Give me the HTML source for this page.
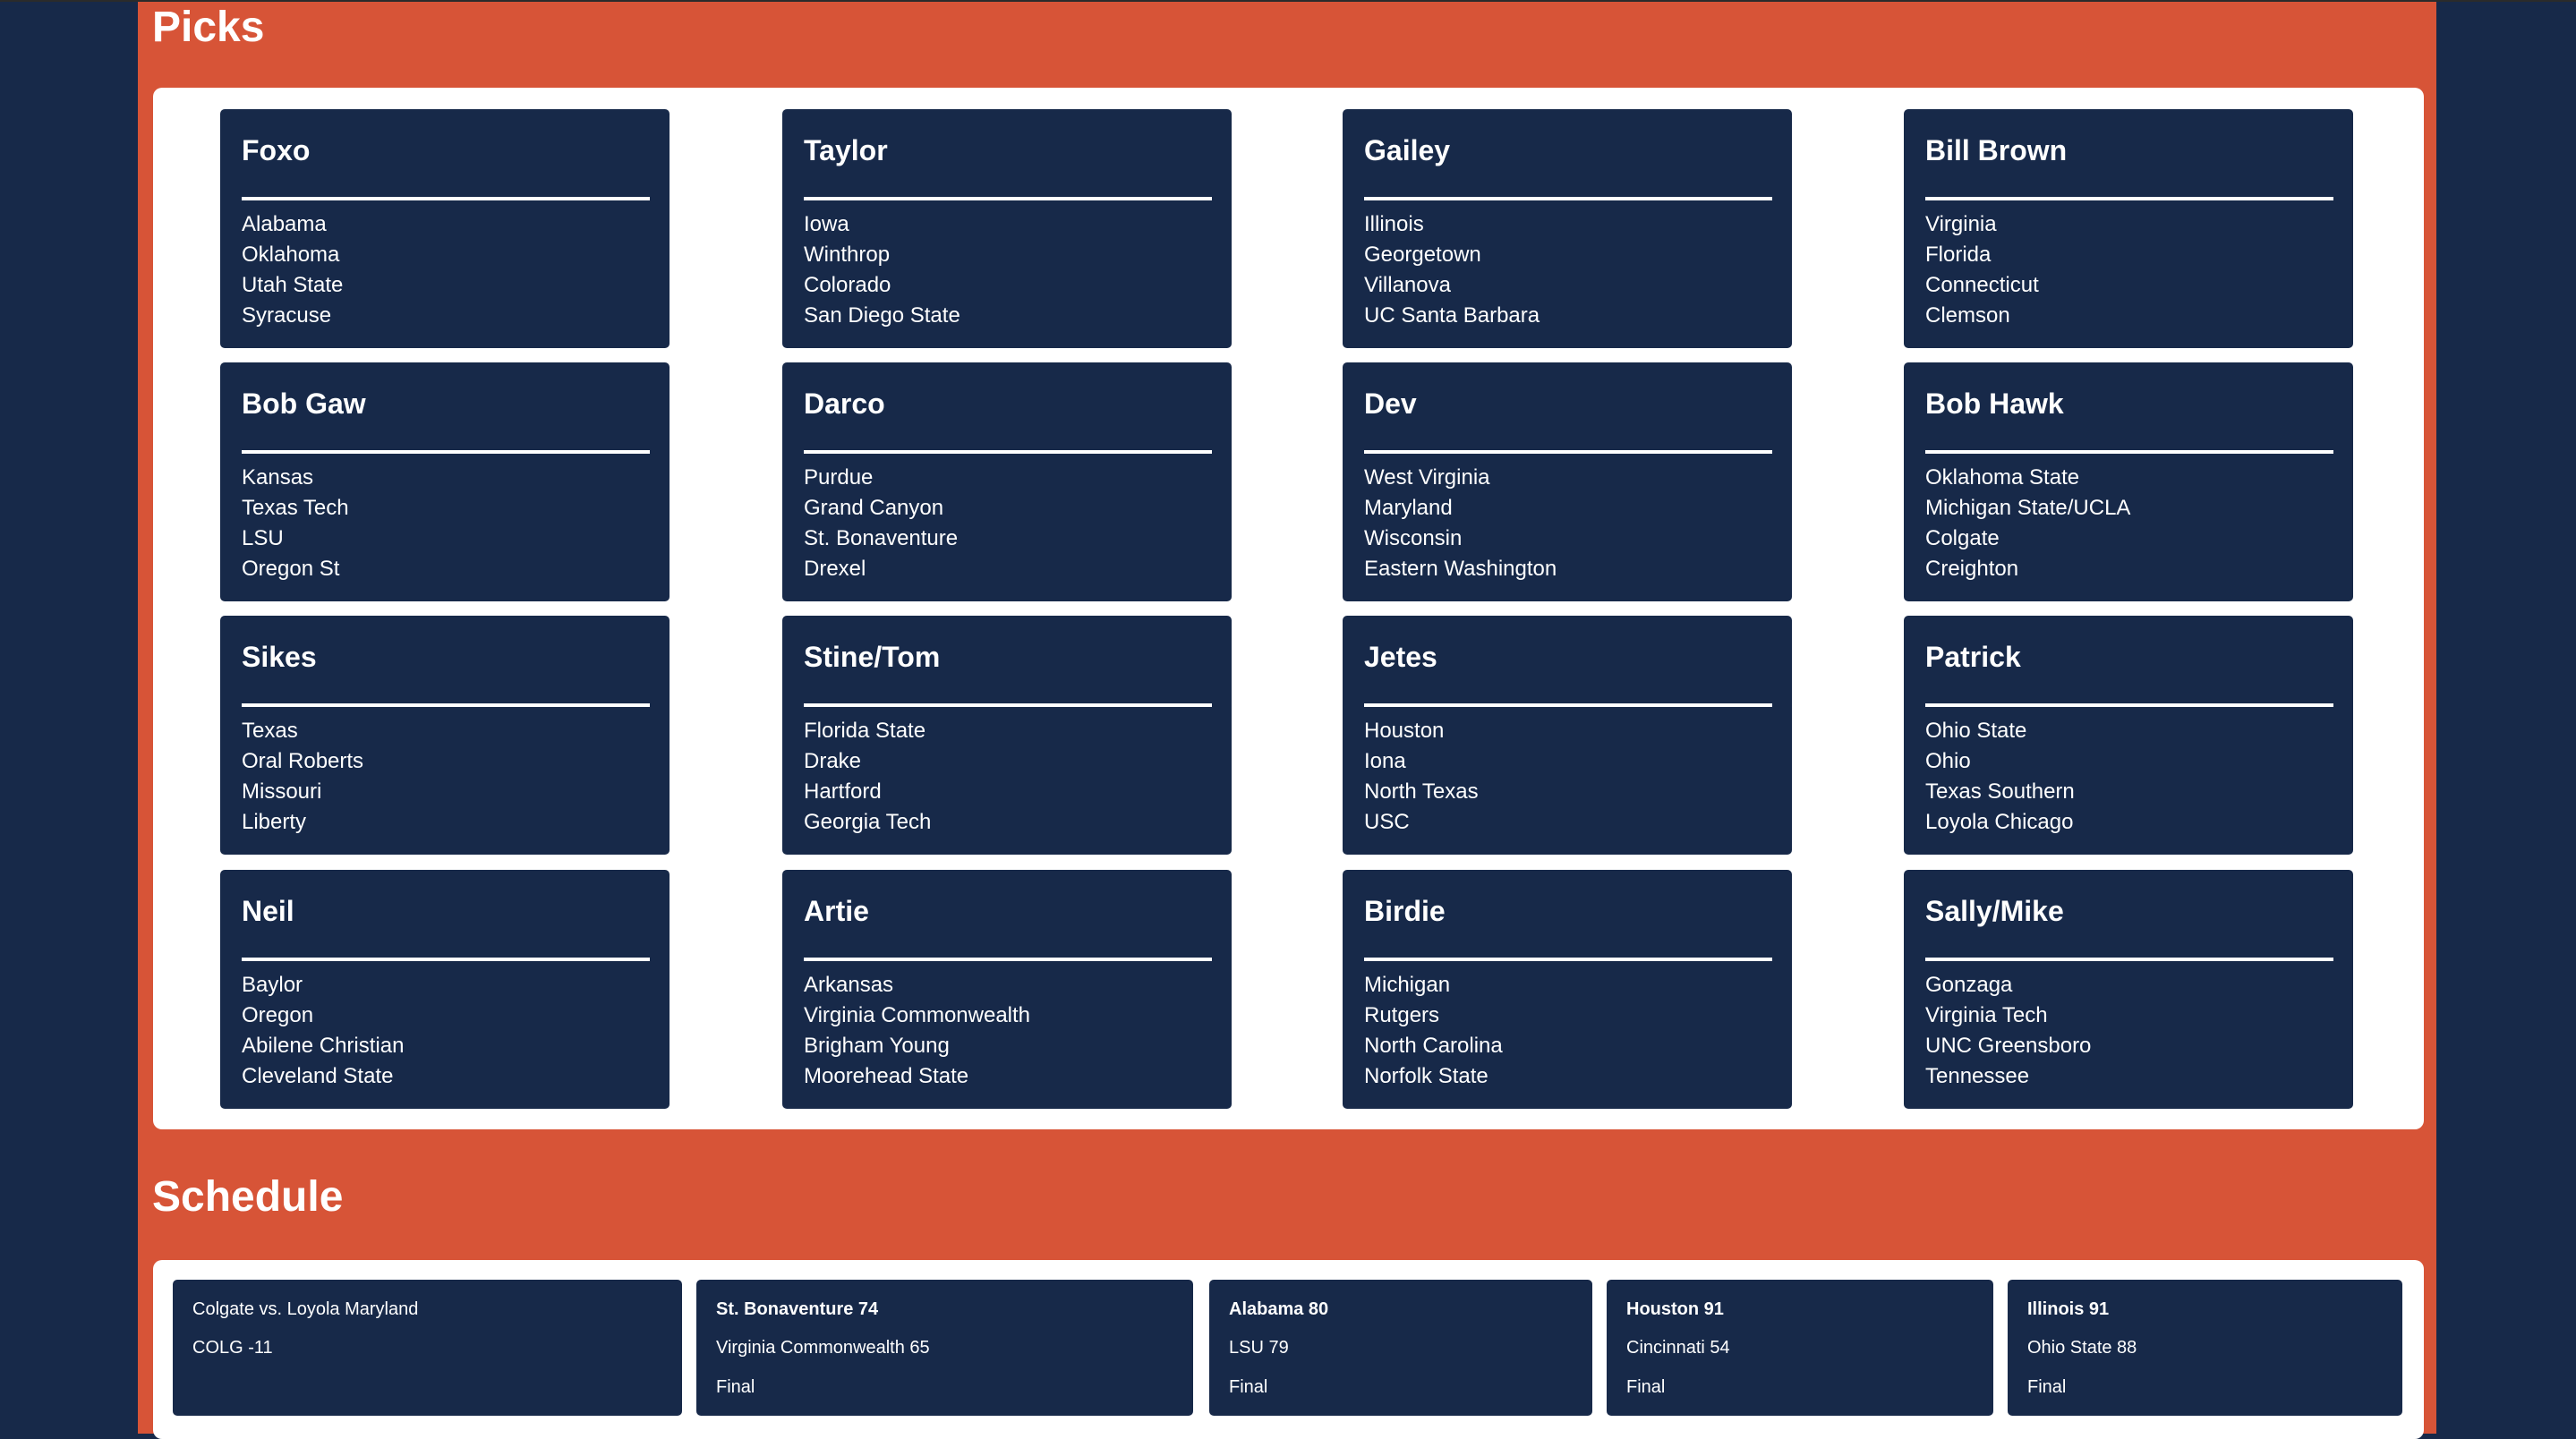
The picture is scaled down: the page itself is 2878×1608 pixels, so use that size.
<!DOCTYPE html>
<html><head><meta charset="utf-8"><style>
*{margin:0;padding:0;box-sizing:border-box}
body{width:2878px;height:1594px;background:#172949;position:relative;overflow:hidden;font-family:"Liberation Sans",Arial,sans-serif;color:#fff}
.top{position:absolute;left:0;top:0;width:2878px;height:2px;background:#2b2b2b}
.or{position:absolute;left:154px;top:2px;width:2568px;height:1600px;background:#d75437}
h1{position:absolute;left:170px;font-size:48px;font-weight:bold;line-height:1}
.panel{position:absolute;left:171px;width:2537px;background:#fff;border-radius:10px}
.card{position:absolute;width:502px;height:267px;background:#172949;border-radius:5px;padding:0 24px}
.card h2{font-size:32px;font-weight:bold;position:absolute;left:24px;top:28px}
.card .ln{position:absolute;left:24px;right:22px;top:98px;height:4px;background:#fff}
.card ul{list-style:none;position:absolute;left:24px;top:112px;font-size:24px;line-height:34px}
.sc{position:absolute;top:1430px;height:152px;background:#172949;border-radius:5px;padding:0 22px;font-size:20px}
.sc div{position:absolute;left:22px}
</style></head><body>
<div class="top"></div>
<div class="or"></div>
<h1 style="top:7px">Picks</h1>
<div class="panel" style="top:98px;height:1164px"></div>
<h1 style="top:1314px">Schedule</h1>
<div class="panel" style="top:1408px;height:200px"></div>

<div class="card" style="left:246px;top:122px"><h2>Foxo</h2><div class="ln"></div><ul><li>Alabama</li><li>Oklahoma</li><li>Utah State</li><li>Syracuse</li></ul></div>
<div class="card" style="left:874px;top:122px"><h2>Taylor</h2><div class="ln"></div><ul><li>Iowa</li><li>Winthrop</li><li>Colorado</li><li>San Diego State</li></ul></div>
<div class="card" style="left:1500px;top:122px"><h2>Gailey</h2><div class="ln"></div><ul><li>Illinois</li><li>Georgetown</li><li>Villanova</li><li>UC Santa Barbara</li></ul></div>
<div class="card" style="left:2127px;top:122px"><h2>Bill Brown</h2><div class="ln"></div><ul><li>Virginia</li><li>Florida</li><li>Connecticut</li><li>Clemson</li></ul></div>

<div class="card" style="left:246px;top:405px"><h2>Bob Gaw</h2><div class="ln"></div><ul><li>Kansas</li><li>Texas Tech</li><li>LSU</li><li>Oregon St</li></ul></div>
<div class="card" style="left:874px;top:405px"><h2>Darco</h2><div class="ln"></div><ul><li>Purdue</li><li>Grand Canyon</li><li>St. Bonaventure</li><li>Drexel</li></ul></div>
<div class="card" style="left:1500px;top:405px"><h2>Dev</h2><div class="ln"></div><ul><li>West Virginia</li><li>Maryland</li><li>Wisconsin</li><li>Eastern Washington</li></ul></div>
<div class="card" style="left:2127px;top:405px"><h2>Bob Hawk</h2><div class="ln"></div><ul><li>Oklahoma State</li><li>Michigan State/UCLA</li><li>Colgate</li><li>Creighton</li></ul></div>

<div class="card" style="left:246px;top:688px"><h2>Sikes</h2><div class="ln"></div><ul><li>Texas</li><li>Oral Roberts</li><li>Missouri</li><li>Liberty</li></ul></div>
<div class="card" style="left:874px;top:688px"><h2>Stine/Tom</h2><div class="ln"></div><ul><li>Florida State</li><li>Drake</li><li>Hartford</li><li>Georgia Tech</li></ul></div>
<div class="card" style="left:1500px;top:688px"><h2>Jetes</h2><div class="ln"></div><ul><li>Houston</li><li>Iona</li><li>North Texas</li><li>USC</li></ul></div>
<div class="card" style="left:2127px;top:688px"><h2>Patrick</h2><div class="ln"></div><ul><li>Ohio State</li><li>Ohio</li><li>Texas Southern</li><li>Loyola Chicago</li></ul></div>

<div class="card" style="left:246px;top:972px"><h2>Neil</h2><div class="ln"></div><ul><li>Baylor</li><li>Oregon</li><li>Abilene Christian</li><li>Cleveland State</li></ul></div>
<div class="card" style="left:874px;top:972px"><h2>Artie</h2><div class="ln"></div><ul><li>Arkansas</li><li>Virginia Commonwealth</li><li>Brigham Young</li><li>Moorehead State</li></ul></div>
<div class="card" style="left:1500px;top:972px"><h2>Birdie</h2><div class="ln"></div><ul><li>Michigan</li><li>Rutgers</li><li>North Carolina</li><li>Norfolk State</li></ul></div>
<div class="card" style="left:2127px;top:972px"><h2>Sally/Mike</h2><div class="ln"></div><ul><li>Gonzaga</li><li>Virginia Tech</li><li>UNC Greensboro</li><li>Tennessee</li></ul></div>

<div class="sc" style="left:193px;width:569px"><div style="top:22px">Colgate vs. Loyola Maryland</div><div style="top:65px">COLG -11</div></div>
<div class="sc" style="left:778px;width:555px"><div style="top:22px;font-weight:bold">St. Bonaventure 74</div><div style="top:65px">Virginia Commonwealth 65</div><div style="top:109px">Final</div></div>
<div class="sc" style="left:1351px;width:428px"><div style="top:22px;font-weight:bold">Alabama 80</div><div style="top:65px">LSU 79</div><div style="top:109px">Final</div></div>
<div class="sc" style="left:1795px;width:432px"><div style="top:22px;font-weight:bold">Houston 91</div><div style="top:65px">Cincinnati 54</div><div style="top:109px">Final</div></div>
<div class="sc" style="left:2243px;width:441px"><div style="top:22px;font-weight:bold">Illinois 91</div><div style="top:65px">Ohio State 88</div><div style="top:109px">Final</div></div>
</body></html>
